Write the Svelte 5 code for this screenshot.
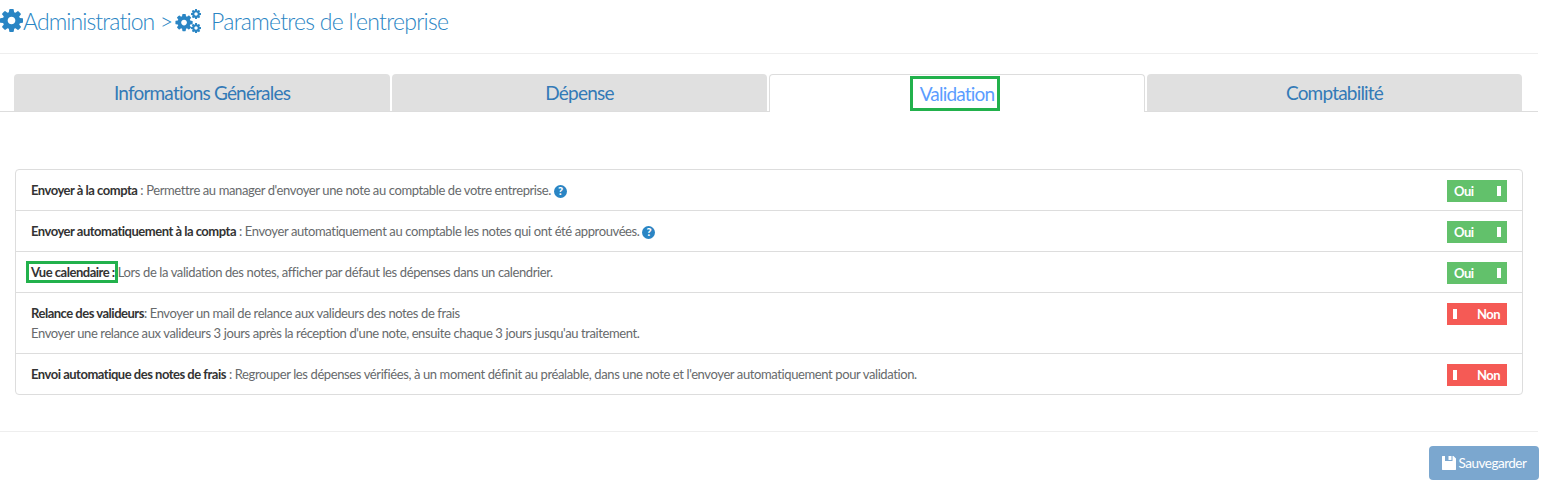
<script>
	const tabs = ['Informations Générales', 'Dépense', 'Validation', 'Comptabilité'];
	const activeTab = 'Validation';
	const cogPath =
		'M1152 896q0-106-75-181t-181-75-181 75-75 181 75 181 181 75 181-75 75-181zm512-109v222q0 12-8 23t-20 13l-185 28q-19 54-39 91 35 50 107 138 10 12 10 25t-9 23q-27 37-99 108t-94 71q-12 0-26-9l-138-108q-44 23-91 38-16 136-29 186-7 28-36 28h-222q-14 0-24.5-8.5t-11.5-21.5l-28-184q-49-16-90-37l-141 107q-10 9-25 9-14 0-25-11-126-114-165-168-7-10-7-23 0-12 8-23 15-21 51-66.5t54-70.5q-27-50-41-99l-183-27q-13-2-21-12.5t-8-23.5v-222q0-12 8-23t19-13l186-28q14-46 39-92-40-57-107-138-10-12-10-24 0-10 9-23 26-36 98.5-107.5t94.5-71.5q13 0 26 10l138 107q44-23 91-38 16-136 29-186 7-28 36-28h222q14 0 24.5 8.5t11.5 21.5l28 184q49 16 90 37l142-107q9-9 24-9 13 0 25 10 129 119 165 170 7 8 7 22 0 12-8 23-15 21-51 66.5t-54 70.5q26 50 41 98l183 28q13 2 21 12.5t8 23.5z';
</script>

<div class="page">
	<h1 class="title">
		<svg class="cog" viewBox="128 128 1536 1536"><path d={cogPath} /></svg>
		<span>Administration &gt;</span>
		<svg class="cogs" viewBox="0 0 26 24">
			<path transform="translate(-1 3.5) scale(0.0112)" d={cogPath} />
			<path transform="translate(15.2 -0.8) scale(0.0065)" d={cogPath} />
			<path transform="translate(15.2 13.2) scale(0.0065)" d={cogPath} />
		</svg>
		<span class="sub">Paramètres de l'entreprise</span>
	</h1>

	<div class="tabs">
		{#each tabs as tab}
			<div class="tab" class:active={tab === activeTab}>
				<span class:mark={tab === activeTab}>{tab}</span>
			</div>
		{/each}
	</div>

	<div class="list">
		<div class="row">
			<div class="text">
				<b>Envoyer à la compta</b> : Permettre au manager d'envoyer une note au comptable de votre entreprise.
				<span class="help">?</span>
			</div>
			<div class="toggle on"><span class="label">Oui</span><i></i></div>
		</div>
		<div class="row">
			<div class="text">
				<b>Envoyer automatiquement à la compta</b> : Envoyer automatiquement au comptable les notes qui ont été approuvées.
				<span class="help">?</span>
			</div>
			<div class="toggle on"><span class="label">Oui</span><i></i></div>
		</div>
		<div class="row">
			<div class="text"><b class="boxed">Vue calendaire :</b>Lors de la validation des notes, afficher par défaut les dépenses dans un calendrier.</div>
			<div class="toggle on"><span class="label">Oui</span><i></i></div>
		</div>
		<div class="row">
			<div class="text">
				<b>Relance des valideurs</b>: Envoyer un mail de relance aux valideurs des notes de frais<br />
				Envoyer une relance aux valideurs 3 jours après la réception d'une note, ensuite chaque 3 jours jusqu'au traitement.
			</div>
			<div class="toggle off"><i></i><span class="label">Non</span></div>
		</div>
		<div class="row">
			<div class="text">
				<b>Envoi automatique des notes de frais</b> : Regrouper les dépenses vérifiées, à un moment définit au préalable, dans une note et l'envoyer automatiquement pour validation.
			</div>
			<div class="toggle off"><i></i><span class="label">Non</span></div>
		</div>
	</div>

	<div class="footer">
		<button class="save">
			<svg viewBox="0 0 14 14"><path d="M0 .5C0 .2.2 0 .5 0H3v5h7.500V0h1L14 2.500v11c0 .3-.2.5-.5.5H.5c-.3 0-.5-.2-.5-.5zM6.500 0h3v4h-3z" /></svg>
			Sauvegarder
		</button>
	</div>
</div>

<style>
	:global(body) {
		margin: 0;
		background: #fff;
	}

	.page {
		width: 1538px;
		font-family: Lato, 'Open Sans', sans-serif;
		font-size: 13px;
		color: #676a6c;
	}

	.title {
		display: flex;
		align-items: center;
		height: 54px;
		margin: 0;
		padding-bottom: 12px;
		box-sizing: border-box;
		border-bottom: 1px solid #eee;
		font-size: 23px;
		font-weight: 300;
		letter-spacing: -0.9px;
		color: #2a85c4;
		white-space: pre;
	}

	.sub {
		letter-spacing: -0.75px;
	}

	.cog {
		width: 23px;
		height: 23px;
		fill: #2a85c4;
	}

	.cogs {
		width: 26px;
		height: 24px;
		margin-left: 3px;
		margin-right: 10px;
		fill: #2a85c4;
	}

	.tabs {
		display: grid;
		grid-template-columns: 376px 375px 376px 375px;
		gap: 2px;
		height: 38px;
		box-sizing: border-box;
		margin-top: 20px;
		padding-left: 14px;
		border-bottom: 1px solid #ddd;
	}

	.tab {
		height: 37px;
		box-sizing: border-box;
		display: flex;
		align-items: center;
		justify-content: center;
		background: #e0e0e0;
		border-radius: 4px 4px 0 0;
		font-size: 19px;
		letter-spacing: -0.8px;
		color: #337ab7;
	}

	.tab.active {
		height: 38px;
		background: #fff;
		border: 1px solid #ddd;
		border-bottom: none;
		color: #5b9dff;
	}

	.mark {
		display: inline-block;
		line-height: 20px;
		outline: 3px solid #22b14c;
		margin-right: 4px;
		padding: 5px 3px 4px 7px;
	}

	.list {
		margin: 57px 15px 0;
		border: 1px solid #ddd;
		border-radius: 4px;
	}

	.row {
		display: flex;
		justify-content: space-between;
		align-items: flex-start;
		padding: 10px 15px;
		border-bottom: 1px solid #ddd;
		line-height: 20px;
	}

	.row:last-child {
		border-bottom: none;
	}

	.text {
		letter-spacing: -0.39px;
	}

	.text b {
		font-weight: 700;
		color: #333;
		letter-spacing: -0.49px;
	}

	.boxed {
		outline: 3px solid #22b14c;
		padding: 0 0 0 2px;
		margin: 0 3px 0 -2px;
	}

	.help {
		display: inline-flex;
		align-items: center;
		justify-content: center;
		width: 13px;
		height: 13px;
		border-radius: 50%;
		background: #2a85c4;
		color: #fff;
		font-size: 11px;
		font-weight: 900;
		letter-spacing: 0;
	}

	.toggle {
		display: flex;
		align-items: center;
		justify-content: space-between;
		width: 60px;
		height: 22px;
		margin-bottom: -2px;
		box-sizing: border-box;
		padding: 0 7px;
		color: #fff;
		font-weight: 700;
		font-size: 13px;
		letter-spacing: -0.5px;
	}

	.toggle i {
		width: 4px;
		height: 10px;
		background: #fff;
	}

	.toggle.on {
		background: #62c16b;
	}

	.toggle.on i {
		margin-right: -1px;
	}

	.toggle.off {
		background: #f55a55;
	}

	.toggle.off i {
		margin-left: -1px;
	}

	.footer {
		margin-top: 36px;
		border-top: 1px solid #eee;
		padding-top: 14px;
		display: flex;
		justify-content: flex-end;
	}

	.save {
		display: flex;
		align-items: center;
		justify-content: center;
		gap: 3px;
		width: 110px;
		height: 34px;
		padding: 0;
		margin-right: -1px;
		border: none;
		border-radius: 4px;
		background: #7ba7cf;
		color: #fff;
		font-family: inherit;
		font-size: 13.5px;
		letter-spacing: -0.5px;
	}

	.save svg {
		width: 14px;
		height: 14px;
		fill: #fff;
	}
</style>
